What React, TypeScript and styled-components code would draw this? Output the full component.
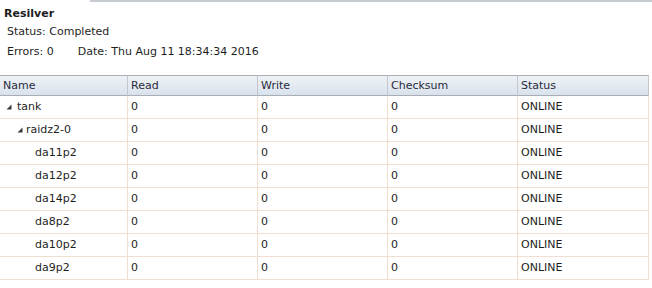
import * as React from 'react'
import styled, { createGlobalStyle } from 'styled-components'

const GlobalStyle = createGlobalStyle`
  html, body {
    margin: 0;
    padding: 0;
    background: #ffffff;
  }
  body {
    font-family: "DejaVu Sans", Verdana, sans-serif;
    font-size: 11px;
    color: #1e1e1e;
  }
`

const Page = styled.div`
  width: 652px;
  height: 288px;
  overflow: hidden;
  background: #fff;
`

const TopRule = styled.div`
  margin-left: 90px;
  height: 2px;
  background: #c6cad1;
`

const Summary = styled.section`
  padding: 5px 0 0 4px;
`

const Title = styled.h2`
  margin: 0;
  font-size: 11px;
  font-weight: bold;
  line-height: 14px;
  color: #1c1c1c;
`

const InfoLine = styled.div<{ $gap: number }>`
  display: flex;
  gap: 24px;
  margin-top: ${p => p.$gap}px;
  padding-left: 3px;
  line-height: 14px;
`

const Grid = styled.div`
  margin-top: 16px;
  display: grid;
  grid-template-columns: 128px 130px 130px 130px 131px;
  width: 649px;
`

const HeadCell = styled.div`
  height: 19px;
  line-height: 19px;
  padding-left: 3px;
  border-top: 1px solid #a9adb4;
  border-bottom: 1px solid #a9adb4;
  border-right: 1px solid #c3c7cd;
  background: linear-gradient(#eef2f6, #d9e2ec);
  color: #2a2a3a;
  white-space: nowrap;
`

const Cell = styled.div`
  height: 22px;
  line-height: 22px;
  padding-left: 3px;
  border-bottom: 1px solid #f0dfd0;
  border-right: 1px solid #f0dfd0;
  white-space: nowrap;
`

const NameCell = styled(Cell)<{ $depth: number }>`
  padding-left: ${p => (p.$depth === 0 ? 6 : p.$depth === 1 ? 17 : 35)}px;
`

const Toggle = styled.svg<{ $space: number }>`
  width: 6px;
  height: 6px;
  margin-right: ${p => p.$space}px;
  vertical-align: baseline;
`

type Row = { name: string; depth: number }

const rows: Row[] = [
  { name: 'tank', depth: 0 },
  { name: 'raidz2-0', depth: 1 },
  { name: 'da11p2', depth: 2 },
  { name: 'da12p2', depth: 2 },
  { name: 'da14p2', depth: 2 },
  { name: 'da8p2', depth: 2 },
  { name: 'da10p2', depth: 2 },
  { name: 'da9p2', depth: 2 },
]

const columns = ['Name', 'Read', 'Write', 'Checksum', 'Status']

export default function App() {
  return (
    <Page>
      <GlobalStyle />
      <TopRule />
      <Summary>
        <Title>Resilver</Title>
        <InfoLine $gap={4}>
          <span>Status: Completed</span>
        </InfoLine>
        <InfoLine $gap={6}>
          <span>Errors: 0</span>
          <span>Date: Thu Aug 11 18:34:34 2016</span>
        </InfoLine>
      </Summary>
      <Grid>
        {columns.map(c => (
          <HeadCell key={c}>{c}</HeadCell>
        ))}
        {rows.map(r => (
          <React.Fragment key={r.name}>
            <NameCell $depth={r.depth}>
              {r.depth < 2 && (
                <Toggle viewBox="0 0 6 6" $space={r.depth === 0 ? 5 : 3}>
                  <polygon points="5.5,0.5 5.5,5.5 0.5,5.5" fill="#3a3a3a" />
                </Toggle>
              )}
              {r.name}
            </NameCell>
            <Cell>0</Cell>
            <Cell>0</Cell>
            <Cell>0</Cell>
            <Cell>ONLINE</Cell>
          </React.Fragment>
        ))}
      </Grid>
    </Page>
  )
}
